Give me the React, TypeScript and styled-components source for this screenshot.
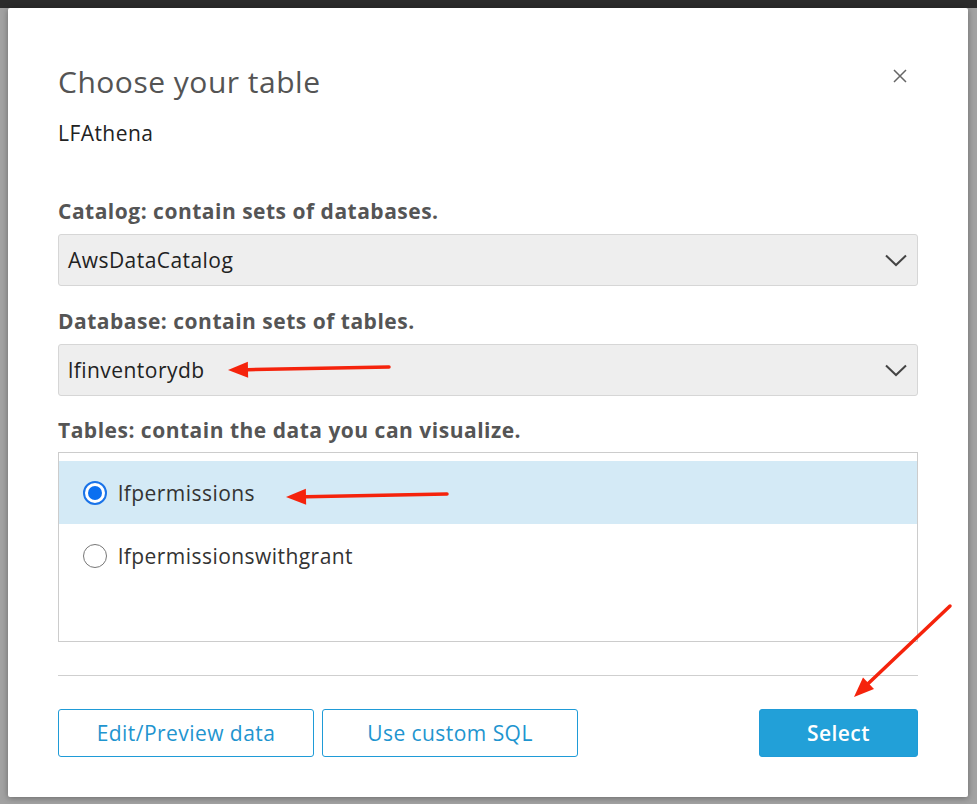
import React, { FunctionComponent } from "react"
import styled, { createGlobalStyle } from "styled-components"

const GlobalStyle = createGlobalStyle`
  html, body {
    margin: 0;
    padding: 0;
    background: #9e9e9e;
    font-family: "Open Sans", "Noto Sans", sans-serif;
  }
`

const Page = styled.div`
  position: relative;
  width: 977px;
  height: 804px;
  overflow: hidden;
  background: #a2a2a2;
`

const TopBar = styled.div`
  height: 8px;
  background: #2b2b2b;
`

const Modal = styled.div`
  position: relative;
  margin-left: 8px;
  width: 960px;
  height: 789px;
  box-sizing: border-box;
  background: #fff;
  border-radius: 2px;
  box-shadow: 0 1px 6px rgba(0, 0, 0, 0.35);
  padding: 0 50px;
  display: flex;
  flex-direction: column;
`

const Header = styled.div`
  display: flex;
  justify-content: space-between;
  align-items: flex-start;
  padding-top: 56px;
`

const Title = styled.h1`
  margin: 0;
  font-size: 30px;
  line-height: 36px;
  font-weight: 400;
  letter-spacing: 0.5px;
  color: #545454;
`

const Close = styled.button`
  border: none;
  background: none;
  padding: 0;
  margin: 5px 11px 0 0;
  width: 14px;
  height: 14px;
  cursor: pointer;
`

const Source = styled.div`
  margin-top: 20px;
  font-size: 21px;
  line-height: 26px;
  letter-spacing: 0.45px;
  color: #222;
`

const Label = styled.div<{ $gap: number }>`
  margin-top: ${({ $gap }) => $gap}px;
  font-size: 21px;
  line-height: 24px;
  font-weight: 700;
  letter-spacing: 0.5px;
  color: #555;
`

const SelectBox = styled.div`
  margin-top: 11px;
  height: 52px;
  flex-shrink: 0;
  box-sizing: border-box;
  display: flex;
  align-items: center;
  justify-content: space-between;
  padding: 0 10px 0 9px;
  background: #eeeeee;
  border: 1px solid #d6d6d6;
  border-radius: 3px;
  font-size: 21px;
  letter-spacing: 0.45px;
  color: #222;
`

const ListBox = styled.div`
  margin-top: 10px;
  height: 190px;
  flex-shrink: 0;
  box-sizing: border-box;
  border: 1px solid #cccccc;
  padding-top: 8px;
`

const Item = styled.label<{ $selected?: boolean }>`
  display: flex;
  align-items: center;
  gap: 11px;
  height: 63px;
  padding-left: 24px;
  background: ${({ $selected }) => ($selected ? "#d4eaf6" : "transparent")};
  font-size: 21px;
  letter-spacing: 0.45px;
  color: #333;
`

const Radio = styled.span<{ $checked?: boolean }>`
  width: 24px;
  height: 24px;
  box-sizing: border-box;
  border-radius: 50%;
  border: ${({ $checked }) => ($checked ? "2px solid #1a73e8" : "1.5px solid #777")};
  background: #fff;
  display: flex;
  align-items: center;
  justify-content: center;

  &::after {
    content: "";
    width: 14px;
    height: 14px;
    border-radius: 50%;
    background: ${({ $checked }) => ($checked ? "#0b6ff0" : "transparent")};
  }
`

const Divider = styled.hr`
  margin: 33px 0 0;
  border: none;
  border-top: 1px solid #cfcfcf;
`

const Footer = styled.div`
  margin-top: 33px;
  display: flex;
  gap: 8px;
`

const Button = styled.button<{ $primary?: boolean; $width: number }>`
  width: ${({ $width }) => $width}px;
  height: 48px;
  box-sizing: border-box;
  border-radius: 3px;
  border: 1px solid #1f9bd7;
  background: ${({ $primary }) => ($primary ? "#22a0d8" : "#fff")};
  color: ${({ $primary }) => ($primary ? "#fff" : "#1f95cf")};
  font-family: inherit;
  font-size: 21px;
  letter-spacing: 0.45px;
  font-weight: ${({ $primary }) => ($primary ? 600 : 400)};
  cursor: pointer;
  ${({ $primary }) => ($primary ? "margin-left: auto;" : "")}
`

const Annotations = styled.svg`
  position: absolute;
  left: 0;
  top: 0;
  pointer-events: none;
`

const Chevron = () => (
  <svg width="22" height="13" viewBox="0 0 22 13">
    <path d="M1 1.5 L11 11 L21 1.5" fill="none" stroke="#444" strokeWidth="2" />
  </svg>
)

const Arrow: FunctionComponent<{ x1: number; y1: number; x2: number; y2: number }> = ({
  x1,
  y1,
  x2,
  y2,
}) => {
  const a = Math.atan2(y2 - y1, x2 - x1)
  const len = 20
  const w = 8
  const bx = x2 - len * Math.cos(a)
  const by = y2 - len * Math.sin(a)
  const px = -Math.sin(a) * w
  const py = Math.cos(a) * w
  return (
    <g>
      <line x1={x1} y1={y1} x2={bx} y2={by} stroke="#f5230c" strokeWidth="3.5" strokeLinecap="round" />
      <polygon points={`${x2},${y2} ${bx + px},${by + py} ${bx - px},${by - py}`} fill="#f5230c" />
    </g>
  )
}

export default function App() {
  return (
    <>
      <GlobalStyle />
      <Page>
        <TopBar />
        <Modal>
          <Header>
            <Title>Choose your table</Title>
            <Close aria-label="Close">
              <svg width="14" height="14" viewBox="0 0 14 14">
                <path d="M1 1 L13 13 M13 1 L1 13" stroke="#666" strokeWidth="1.5" />
              </svg>
            </Close>
          </Header>
          <Source>LFAthena</Source>

          <Label $gap={53}>Catalog: contain sets of databases.</Label>
          <SelectBox>
            AwsDataCatalog
            <Chevron />
          </SelectBox>

          <Label $gap={23}>Database: contain sets of tables.</Label>
          <SelectBox>
            lfinventorydb
            <Chevron />
          </SelectBox>

          <Label $gap={22}>Tables: contain the data you can visualize.</Label>
          <ListBox>
            <Item $selected>
              <Radio $checked />
              lfpermissions
            </Item>
            <Item>
              <Radio />
              lfpermissionswithgrant
            </Item>
          </ListBox>

          <Divider />

          <Footer>
            <Button $width={256}>Edit/Preview data</Button>
            <Button $width={256}>Use custom SQL</Button>
            <Button $primary $width={159}>Select</Button>
          </Footer>
        </Modal>
        <Annotations width="977" height="804">
          <Arrow x1={389} y1={367} x2={228} y2={370} />
          <Arrow x1={447} y1={494} x2={286} y2={497} />
          <Arrow x1={950} y1={606} x2={854} y2={697} />
        </Annotations>
      </Page>
    </>
  )
}
